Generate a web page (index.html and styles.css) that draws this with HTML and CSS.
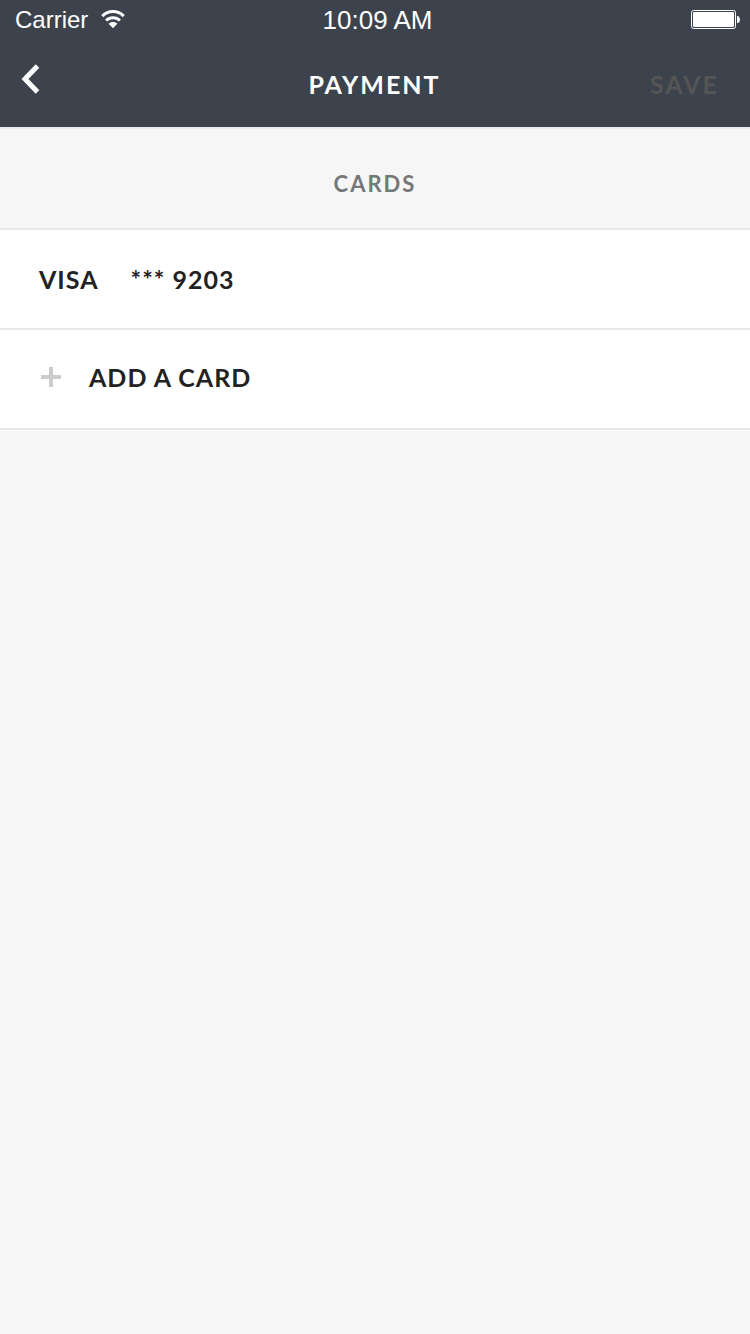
FILE: index.html
```
<!DOCTYPE html>
<html lang="en">
<head>
<meta charset="utf-8">
<meta name="viewport" content="width=device-width, initial-scale=1">
<title>Payment</title>
<link rel="stylesheet" href="styles.css">
</head>
<body>
<header class="top">
  <div class="status">
    <div class="carrier">
      <span>Carrier</span>
      <svg class="wifi" width="24" height="20" viewBox="0 0 24 20" aria-hidden="true">
        <g fill="none" stroke="#fff" stroke-width="3">
          <path d="M1.300 6.100C7.300 .1 16.700 .1 22.700 6.100"/>
          <path d="M5.100 10.500C9 6.700 15 6.700 18.900 10.500"/>
        </g>
        <path fill="#fff" d="M7.600 13.800C10 11.500 14 11.500 16.400 13.800L12 18.200Z"/>
      </svg>
    </div>
    <time class="clock">10:09 AM</time>
    <svg class="battery" width="49" height="20" viewBox="0 0 49 20" role="img" aria-label="Battery full">
      <rect x=".5" y=".5" width="44" height="18" rx="2" fill="none" stroke="#fff"/>
      <rect x="2" y="2" width="41" height="15" rx="1" fill="#fff"/>
      <path d="M46 6H47Q49 7 49 9.500T47 13H46Z" fill="#fff"/>
    </svg>
  </div>
  <nav class="nav">
    <button class="back" type="button" aria-label="Back">
      <svg width="20" height="30" viewBox="0 0 20 30" aria-hidden="true"><path d="M16.500 2L4 15 16.500 28" fill="none" stroke="#fff" stroke-width="5"/></svg>
    </button>
    <h1 class="title">PAYMENT</h1>
    <button class="save" type="button" disabled>SAVE</button>
  </nav>
</header>
<main>
  <h2 class="section">CARDS</h2>
  <ul class="cards">
    <li><button class="row" type="button"><span class="brand">VISA</span><span>*** 9203</span></button></li>
    <li><button class="row add" type="button">
      <svg class="plus" width="20" height="20" viewBox="0 0 20 20" aria-hidden="true"><path d="M8 0h4v8h8v4h-8v8H8v-8H0V8h8Z" fill="#ccc"/></svg>
      <span>ADD A CARD</span></button></li>
  </ul>
</main>
</body>
</html>
```
FILE: styles.css
```
* { box-sizing: border-box; }
body {
  margin: 0;
  min-height: 100vh;
  background: #f6f6f6;
  color: #222;
  font-family: Lato, sans-serif;
  font-size: 25px;
  font-weight: 700;
  line-height: 32px;
}
button {
  border: 0;
  padding: 0;
  background: none;
  color: inherit;
  font: inherit;
  letter-spacing: inherit;
}
h1, h2, ul { margin: 0; padding: 0; font-size: inherit; font-weight: inherit; }
ul { list-style: none; }
svg { display: block; flex: none; }
.top { background: #3c434c; color: #fff; }
.status, .nav {
  display: grid;
  grid-template-columns: 1fr auto 1fr;
  align-items: center;
}
.status {
  height: 40px;
  padding: 0 12px 0 15px;
  font: 24px/40px "Liberation Sans", sans-serif;
}
.status { padding-right: 10px; }
.carrier { display: flex; align-items: center; gap: 13px; }
.clock { font-size: 26px; }
.battery { justify-self: end; }
.nav {
  height: 87px;
  padding: 0 31px 0 21px;
  letter-spacing: 2px;
}
.back { justify-self: start; padding-bottom: 10px; }
.title { padding-left: 9px; }
.save { justify-self: end; color: #555; }
.section {
  padding: 39px 0 28px;
  border-top: 2px solid #ececee;
  color: #777;
  font-size: 22px;
  letter-spacing: 2px;
  text-align: center;
}
.cards {
  border-top: 2px solid #e8e8e8;
  background: #fff;
  letter-spacing: 1px;
  box-shadow: 0 1px #fff;
}
.row {
  display: flex;
  align-items: center;
  gap: 32px;
  width: 100%;
  height: 100px;
  padding: 0 39px;
  border-bottom: 2px solid #e8e8e8;
}
.row.add { gap: 28px; padding: 0 41px 5px; }
```
